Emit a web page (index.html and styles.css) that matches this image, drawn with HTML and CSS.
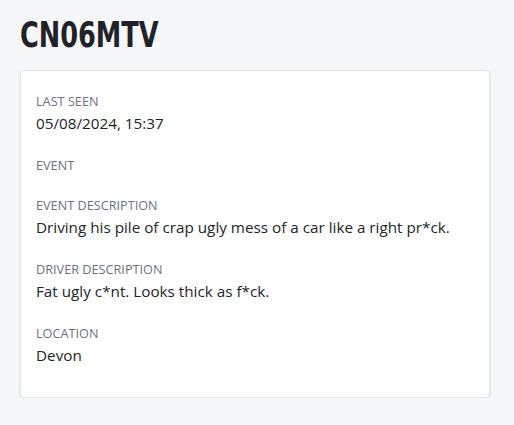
FILE: index.html
```html
<!DOCTYPE html>
<html>
<head>
<meta charset="utf-8">
<link rel="stylesheet" href="styles.css">
</head>
<body>
<main class="page">
  <h1 class="plate"><span class="plate-text">CN06MTV</span></h1>
  <section class="card">
    <dl class="details">
      <div class="item">
        <dt class="label">Last Seen</dt>
        <dd class="value">05/08/2024, 15:37</dd>
      </div>
      <div class="item">
        <dt class="label">Event</dt>
        <dd class="value"></dd>
      </div>
      <div class="item">
        <dt class="label">Event Description</dt>
        <dd class="value">Driving his pile of crap ugly mess of a car like a right pr*ck.</dd>
      </div>
      <div class="item">
        <dt class="label">Driver Description</dt>
        <dd class="value">Fat ugly c*nt. Looks thick as f*ck.</dd>
      </div>
      <div class="item">
        <dt class="label">Location</dt>
        <dd class="value">Devon</dd>
      </div>
    </dl>
  </section>
</main>
</body>
</html>
```

FILE: styles.css
```css
html, body {
  margin: 0;
  padding: 0;
  background: #f6f7f9;
}
body {
  font-family: "Open Sans", "Noto Sans", sans-serif;
  color: #212529;
}
.page {
  padding: 14px 25px 0 20px;
}
.plate {
  margin: 0 0 14px 0;
  font-family: "DejaVu Sans Condensed", "DejaVu Sans", sans-serif;
  font-stretch: condensed;
  font-weight: 700;
  font-size: 36px;
  line-height: 42px;
  color: #1f2329;
}
.plate-text {
  display: inline-block;
  transform: scaleX(0.79);
  transform-origin: left center;
}
.card {
  width: 470px;
  box-sizing: border-box;
  background: #fff;
  border: 1px solid #e3e5e8;
  border-radius: 4px;
  box-shadow: 0 1px 3px rgba(0,0,0,0.08);
  padding: 20px 15px 10px;
}
.details {
  margin: 0;
}
.item {
  margin-bottom: 20px;
}
.label {
  font-size: 12.7px;
  line-height: 20px;
  text-transform: uppercase;
  color: #6c727f;
}
.value {
  margin: 0;
  font-size: 15.25px;
  line-height: 24px;
  color: #212529;
}
.value:empty {
  display: none;
}
```
